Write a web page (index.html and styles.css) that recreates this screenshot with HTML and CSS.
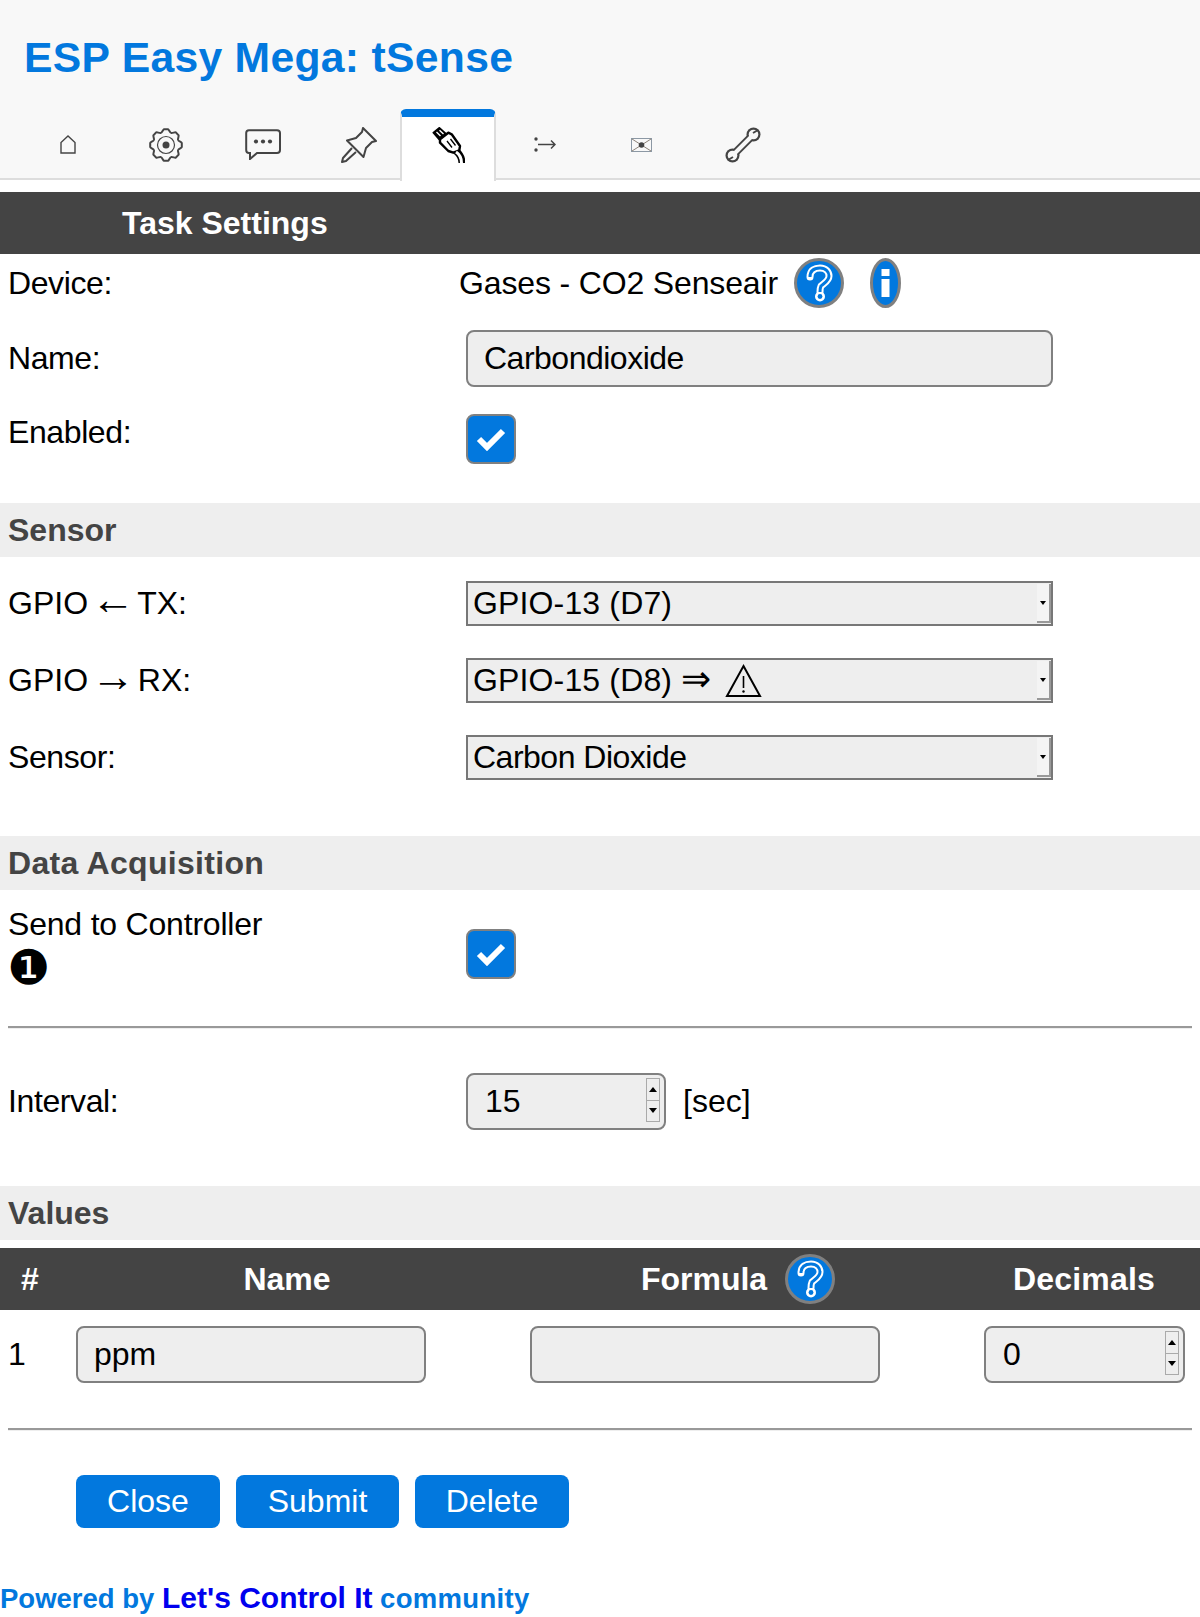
FILE: index.html
```html
<!DOCTYPE html>
<html lang="en">
<head>
  <meta charset="UTF-8">
  <title>ESP Easy Mega: tSense</title>
  <link rel="stylesheet" href="styles.css">
</head>
<body>
  <header class="top">
    <h1>ESP Easy Mega: tSense</h1>
    <nav class="tabs">
      <a class="tab">
        <svg width="16" height="19" viewBox="0 0 16 19"><path d="M1 18V7.5L8 1l7 6.5V18z" fill="none" stroke="#444" stroke-width="1.4"/></svg>
      </a>
      <a class="tab">
        <svg width="34" height="34" viewBox="0 0 34 34" fill="none" stroke="#444" stroke-width="2">
          <defs><path id="tooth" d="M12 5C13.5 4 14 1.5 15 1.2H19C20 1.5 20.5 4 22 5"/></defs>
          <use href="#tooth"/>
          <use href="#tooth" transform="rotate(45 17 17)"/>
          <use href="#tooth" transform="rotate(90 17 17)"/>
          <use href="#tooth" transform="rotate(135 17 17)"/>
          <use href="#tooth" transform="rotate(180 17 17)"/>
          <use href="#tooth" transform="rotate(225 17 17)"/>
          <use href="#tooth" transform="rotate(270 17 17)"/>
          <use href="#tooth" transform="rotate(315 17 17)"/>
          <circle cx="17" cy="17" r="8.5" stroke-width="1.2"/>
          <circle cx="17" cy="17" r="3.5" fill="#444" stroke="none"/>
        </svg>
      </a>
      <a class="tab">
        <svg width="36" height="31" viewBox="0 0 36 31">
          <path d="M4 1.2H32Q35 1.2 35 4V21Q35 24 32 24H12L5 30V24H4Q1.2 24 1.2 21V4Q1.2 1.2 4 1.2Z" fill="none" stroke="#444" stroke-width="2"/>
          <circle cx="11" cy="12.5" r="2.1" fill="#444"/><circle cx="18" cy="12.5" r="2.1" fill="#444"/><circle cx="25" cy="12.5" r="2.1" fill="#444"/>
        </svg>
      </a>
      <a class="tab">
        <svg width="36" height="36" viewBox="0 0 36 36" fill="none" stroke="#444" stroke-width="2" stroke-linejoin="round">
          <path d="M22 1L35 14L31 15L25 21L22.5 30L6 13.5L15 11L21 5Z"/>
          <path d="M11 21L2 31L1 35L5 34L15 25"/>
        </svg>
      </a>
      <a class="tab tab-active">
        <svg width="33" height="36" viewBox="0 0 33 36" stroke-linejoin="round">
          <path d="M1.5 5.7L7.3 1L14 7L7.3 12.3Z" fill="#000" stroke="#000" stroke-width="2"/>
          <path d="M4.5 5L8.5 9M7.5 3.2L11.5 7" stroke="#fff" stroke-width="1.4"/>
          <path d="M24 24C27 26.5 30 30 30 36" fill="none" stroke="#000" stroke-width="7"/>
          <path d="M8 12.3L16.3 5.7L19.7 7.3L28 19L27.3 23.3L21.3 25.7L16.3 24L8 15.7Z" fill="#fff" stroke="#000" stroke-width="2.4"/>
          <path d="M24 25C27 27 29.5 30 29.5 36" fill="none" stroke="#fff" stroke-width="3"/>
          <path d="M15 14L20 20.5M18.5 12L23.5 18.5" stroke="#000" stroke-width="1.3"/>
        </svg>
      </a>
      <a class="tab">
        <svg width="22" height="15" viewBox="0 0 22 15" fill="none" stroke="#444" stroke-width="1.5">
          <circle cx="2" cy="2" r="1.7" fill="#444" stroke="none"/><circle cx="2" cy="13" r="1.7" fill="#444" stroke="none"/>
          <path d="M4 7.5H21M17 3.5L21 7.5L17 11.5"/>
        </svg>
      </a>
      <a class="tab">
        <svg width="21" height="14" viewBox="0 0 21 14" fill="none">
          <rect x=".5" y=".5" width="20" height="13" stroke="#8c98a4"/>
          <path d="M1 1L20 13M20 1L1 13" stroke="#8c8278"/>
          <circle cx="10.5" cy="7" r="2.8" fill="#444"/>
        </svg>
      </a>
      <a class="tab">
        <svg width="36" height="36" viewBox="0 0 36 36" fill="none">
          <g stroke="#444">
            <path d="M7 29L29 7" stroke-width="8"/>
            <circle cx="28.5" cy="7.5" r="7" fill="#444" stroke="none"/>
            <circle cx="7.5" cy="28.5" r="7" fill="#444" stroke="none"/>
          </g>
          <path d="M7 29L29 7" stroke="#f8f8f8" stroke-width="4"/>
          <circle cx="28.5" cy="7.5" r="4.8" fill="#f8f8f8"/>
          <circle cx="7.5" cy="28.5" r="4.8" fill="#f8f8f8"/>
          <path d="M28 6L33 3M8 30L3 33" stroke="#444" stroke-width="2"/>
        </svg>
      </a>
    </nav>
  </header>

  <h2 class="title">Task Settings</h2>

  <div class="row row-device">
    <label>Device:</label>
    <div class="device">
      <span>Gases - CO2 Senseair</span>
      <svg class="help" width="50" height="50" viewBox="0 0 50 50">
        <circle cx="25" cy="25" r="23.5" fill="#0278de" stroke="#808080" stroke-width="3"/>
        <path d="M16 19C16 12 21 10 26 10C32 10 35 14 35 18C35 23 30 25 27 28C26 30 26 31 26 34" fill="none" stroke="#fff" stroke-width="7" stroke-linecap="round"/>
        <circle cx="26" cy="38.5" r="5" fill="#fff"/>
        <path d="M16 19C16 12 21 10 26 10C32 10 35 14 35 18C35 23 30 25 27 28C26 30 26 31 26 34" fill="none" stroke="#0278de" stroke-width="3"/>
        <circle cx="26" cy="38.5" r="2.4" fill="#0278de"/>
      </svg>
      <svg class="info" width="31" height="50" viewBox="0 0 31 50">
        <ellipse cx="15.5" cy="25" rx="14" ry="23.5" fill="#0278de" stroke="#808080" stroke-width="3"/>
        <rect x="11.5" y="11" width="8" height="7" fill="#fff"/>
        <rect x="11.5" y="21" width="8" height="18" fill="#fff"/>
      </svg>
    </div>
  </div>
  <div class="row row-name">
    <label>Name:</label>
    <input class="wide" type="text" value="Carbondioxide">
  </div>
  <div class="row row-enabled">
    <label>Enabled:</label>
    <div class="check"><svg width="30" height="24" viewBox="0 0 30 24"><path d="M3 12L11 20L27 4" fill="none" stroke="#fff" stroke-width="6"/></svg></div>
  </div>

  <h3 class="band band-sensor">Sensor</h3>
  <div class="row row-select first">
    <label class="plain">GPIO <span class="arrow">&#8592;</span> TX:</label>
    <div class="select"><span class="wider">GPIO-13 (D7)</span><i class="drop"></i></div>
  </div>
  <div class="row row-select">
    <label class="plain">GPIO <span class="arrow">&#8594;</span> RX:</label>
    <div class="select">
      <span class="wider">GPIO-15 (D8) <span class="implies">&#8658;</span></span>
      <svg class="warn" width="37" height="36" viewBox="0 0 37 36">
        <path d="M18.5 3L35 33H2Z" fill="none" stroke="#000" stroke-width="2"/>
        <path d="M18.5 13V25" stroke="#000" stroke-width="1.6"/>
        <circle cx="18.5" cy="28.5" r="1.2" fill="#000"/>
      </svg>
      <i class="drop"></i>
    </div>
  </div>
  <div class="row row-select">
    <label>Sensor:</label>
    <div class="select"><span class="narrower">Carbon Dioxide</span><i class="drop"></i></div>
  </div>

  <h3 class="band band-data">Data Acquisition</h3>
  <div class="row row-send">
    <label>Send to Controller<br><span class="num">&#10102;</span></label>
    <div class="check"><svg width="30" height="24" viewBox="0 0 30 24"><path d="M3 12L11 20L27 4" fill="none" stroke="#fff" stroke-width="6"/></svg></div>
  </div>
  <hr class="rule rule-send">
  <div class="row row-interval">
    <label>Interval:</label>
    <div class="number number-interval">
      <input type="text" value="15">
      <span class="spin"><b class="up"></b><b class="down"></b></span>
    </div>
    <span class="unit">[sec]</span>
  </div>

  <h3 class="band band-values">Values</h3>
  <table class="values">
    <thead>
      <tr>
        <th class="col-num">#</th>
        <th class="col-text">Name</th>
        <th class="col-text">
          <span class="with-help">Formula
            <svg class="help" width="50" height="50" viewBox="0 0 50 50">
              <circle cx="25" cy="25" r="23.5" fill="#0278de" stroke="#808080" stroke-width="3"/>
              <path d="M16 19C16 12 21 10 26 10C32 10 35 14 35 18C35 23 30 25 27 28C26 30 26 31 26 34" fill="none" stroke="#fff" stroke-width="7" stroke-linecap="round"/>
              <circle cx="26" cy="38.5" r="5" fill="#fff"/>
              <path d="M16 19C16 12 21 10 26 10C32 10 35 14 35 18C35 23 30 25 27 28C26 30 26 31 26 34" fill="none" stroke="#0278de" stroke-width="3"/>
              <circle cx="26" cy="38.5" r="2.4" fill="#0278de"/>
            </svg>
          </span>
        </th>
        <th class="col-decimals">Decimals</th>
      </tr>
    </thead>
    <tbody>
      <tr>
        <td class="idx">1</td>
        <td><input type="text" value="ppm"></td>
        <td><input type="text" value=""></td>
        <td>
          <div class="number number-decimals">
            <input type="text" value="0">
            <span class="spin"><b class="up"></b><b class="down"></b></span>
          </div>
        </td>
      </tr>
    </tbody>
  </table>
  <hr class="rule rule-values">

  <div class="buttons">
    <a class="btn btn-close">Close</a>
    <a class="btn btn-submit">Submit</a>
    <a class="btn btn-delete">Delete</a>
  </div>

  <footer class="footer">Powered by <a href="#">Let's Control It</a> <span class="community">community</span></footer>
</body>
</html>
```

FILE: styles.css
```css
body {
  margin: 0;
  background: #fff;
  color: #000;
  font-family: "Liberation Sans", Arial, sans-serif;
  font-size: 32px;
}

.top {
  height: 178px;
  background: #f8f8f8;
  border-bottom: 2px solid #ddd;
}

h1 {
  margin: 0;
  padding: 32px 0 0 24px;
  height: 77px;
  font-size: 42.67px;
  line-height: 50px;
  letter-spacing: 0.3px;
  color: #0278de;
}

.tabs {
  display: grid;
  grid-template-columns: 113px 84px 110px 82px 96px 98px 95px 108px;
  margin-left: 11px;
  height: 71px;
}

.tab {
  display: flex;
  align-items: center;
  justify-content: center;
  box-sizing: border-box;
  height: 71px;
}

.tab-active {
  height: 72px;
  background: #fff;
  border-left: 2px solid #ddd;
  border-right: 2px solid #ddd;
  border-top: 8px solid #0278de;
  border-radius: 6px 6px 0 0;
  padding-bottom: 9px;
}

.title {
  margin: 12px 0 0;
  height: 62px;
  padding-left: 122px;
  background: #444;
  color: #fff;
  font-size: 32px;
  line-height: 62px;
}

.row {
  display: grid;
  grid-template-columns: 458px auto;
  justify-content: start;
  padding-left: 8px;
}

label {
  letter-spacing: -0.4px;
}

label.plain {
  letter-spacing: 0;
  word-spacing: -6px;
}

.row-send label {
  letter-spacing: -0.2px;
}

.row-device {
  grid-template-columns: 451px auto;
  height: 58px;
  align-items: center;
}

.device {
  display: flex;
  align-items: center;
  letter-spacing: -0.15px;
}

.device .help {
  margin-left: 16px;
}

.device .info {
  margin-left: 26px;
}

.row-name {
  margin-top: 18px;
  align-items: center;
}

.row-enabled {
  margin-top: 27px;
}

.row-enabled label {
  line-height: 37px;
}

input {
  box-sizing: border-box;
  height: 57px;
  padding: 0 16px;
  background: #eee;
  border: 2px solid #808080;
  border-radius: 8px;
  font: inherit;
  color: #000;
}

.wide {
  width: 587px;
  letter-spacing: -0.5px;
}

.check {
  box-sizing: border-box;
  display: flex;
  align-items: center;
  justify-content: center;
  width: 50px;
  height: 50px;
  background: #0278de;
  border: 2px solid #808080;
  border-radius: 8px;
}

.band {
  margin: 0;
  height: 54px;
  padding-left: 8px;
  background: #eee;
  color: #444;
  font-size: 32px;
  line-height: 54px;
}

.band-sensor {
  margin-top: 39px;
}

.band-data {
  margin-top: 56px;
  letter-spacing: 0.3px;
}

.band-values {
  margin-top: 56px;
}

.row-select {
  margin-top: 32px;
  align-items: center;
}

.row-select.first {
  margin-top: 24px;
}

.arrow {
  font-size: 44px;
  line-height: 0;
}

.select {
  box-sizing: border-box;
  display: flex;
  align-items: center;
  width: 587px;
  height: 45px;
  padding-left: 5px;
  background: #eee;
  border: 2px solid #777;
}

.wider {
  letter-spacing: 0.15px;
}

.narrower {
  letter-spacing: -0.5px;
}

.implies {
  font-size: 36px;
  line-height: 0;
}

.warn {
  margin-left: 14px;
}

.drop {
  box-sizing: border-box;
  display: flex;
  align-items: center;
  justify-content: center;
  margin-left: auto;
  width: 14px;
  height: 39px;
  background: #f4f4f4;
  border-right: 2px solid #999;
  border-bottom: 2px solid #999;
}

.drop::before {
  content: "";
  border: 3px solid transparent;
  border-top: 4px solid #000;
  border-bottom: 0;
}

.row-send {
  margin-top: 14px;
}

.row-send label {
  line-height: 40px;
}

.row-send .check {
  margin-top: 25px;
}

.num {
  display: inline-block;
  margin: 3px 0 0 -1px;
  font-family: "DejaVu Sans", sans-serif;
  font-size: 48px;
  line-height: 40px;
  vertical-align: top;
}

.rule {
  height: 2px;
  margin: 0 8px;
  border: 0;
  background: #999;
  box-shadow: 0 1px 0 #eee;
}

.rule-send {
  margin-top: 39px;
}

.rule-values {
  margin-top: 45px;
}

.row-interval {
  grid-template-columns: 458px auto auto;
  margin-top: 45px;
  align-items: center;
}

.number {
  box-sizing: border-box;
  display: flex;
  align-items: center;
  width: 199px;
  height: 57px;
  padding-right: 4px;
  background: #eee;
  border: 2px solid #808080;
  border-radius: 8px;
}

.number-interval {
  width: 200px;
}

.number-decimals {
  width: 201px;
}

.number input {
  flex: 1;
  min-width: 0;
  height: 50px;
  padding-left: 17px;
  border: 0;
  background: none;
}

.spin {
  box-sizing: border-box;
  display: flex;
  flex-direction: column;
  width: 14px;
  height: 44px;
  margin-top: -3px;
  border: 1px solid #aaa;
  background: #eee;
}

.spin b {
  flex: 1;
  display: flex;
  align-items: center;
  justify-content: center;
}

.spin .down {
  border-top: 1px solid #aaa;
}

.up::before {
  content: "";
  border: 4px solid transparent;
  border-bottom: 5px solid #000;
  border-top: 0;
}

.down::before {
  content: "";
  border: 4px solid transparent;
  border-top: 5px solid #000;
  border-bottom: 0;
}

.unit {
  margin-left: 17px;
}

.values {
  width: 1200px;
  margin-top: 8px;
  border-collapse: collapse;
  table-layout: fixed;
}

.values th {
  height: 62px;
  padding: 0;
  background: #444;
  color: #fff;
  font-size: 32px;
}

.col-num {
  width: 60px;
}

.col-text {
  width: 454px;
}

.col-decimals {
  letter-spacing: 0.2px;
}

.with-help {
  display: inline-flex;
  align-items: center;
  gap: 18px;
  margin-right: 6px;
}

.values td {
  padding: 16px 0 0 16px;
}

.values td.idx {
  padding-left: 8px;
}

.values td input {
  width: 350px;
}

.values td .number input {
  width: auto;
}

.buttons {
  display: flex;
  gap: 16px;
  margin: 45px 0 0 76px;
}

.btn {
  box-sizing: border-box;
  height: 53px;
  background: #0278de;
  color: #fff;
  border-radius: 8px;
  line-height: 53px;
  text-align: center;
}

.btn-close {
  width: 144px;
}

.btn-submit {
  width: 163px;
}

.btn-delete {
  width: 154px;
}

.footer {
  margin-top: 50px;
  color: #0278de;
  font-size: 27.5px;
  font-weight: bold;
  line-height: 40px;
}

.footer a {
  color: #00e;
  font-size: 30px;
  text-decoration: none;
}

.community {
  letter-spacing: 0.3px;
}
```
